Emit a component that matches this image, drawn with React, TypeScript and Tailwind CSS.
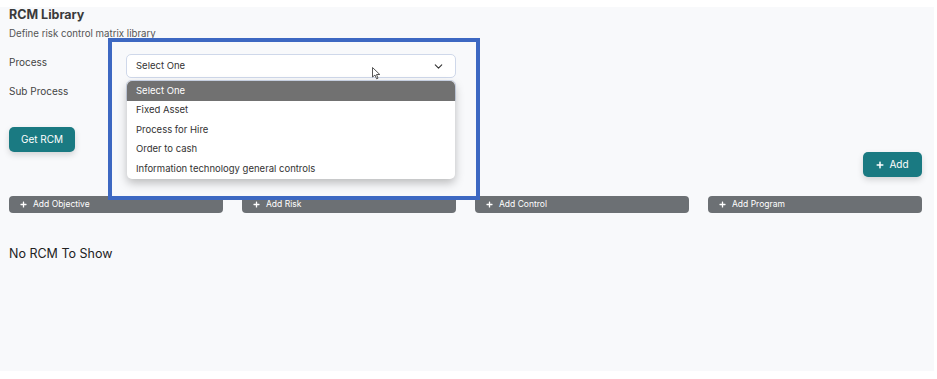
import { ChevronDown } from 'lucide-react';
import { FaPlus } from 'react-icons/fa';

const options = ['Select One', 'Fixed Asset', 'Process for Hire', 'Order to cash', 'Information technology general controls'];
const addBars = ['Add Objective', 'Add Risk', 'Add Control', 'Add Program'];

function SelectBox() {
  return (
    <div className="w-[330px] h-[24px] bg-white border border-[#cfd8ea] rounded-[5px] flex items-center justify-between pl-[9px] pr-[10px]">
      <span className="text-[9.5px] text-[#333]">Select One</span>
      <ChevronDown size={13} strokeWidth={2} className="text-[#333]" />
    </div>
  );
}

export default function App() {
  return (
    <div className="w-[937px] h-[379px] bg-white relative overflow-hidden font-['Inter',sans-serif]">
      <div className="mt-[7px] w-[934px] h-[364px] bg-[#f8f9fb] pl-[9px] pr-[12px]">
        <h1 className="text-[12.5px] font-bold text-[#3a3a3a] leading-[16px]">RCM Library</h1>
        <p className="mt-[4px] text-[9.7px] text-[#555] leading-[14px]">Define risk control matrix library</p>

        <div className="mt-[13px] flex items-center h-[24px]">
          <label className="w-[117px] text-[10px] text-[#444] -mt-[8px]">Process</label>
          <div className="relative">
            <SelectBox />
            <div className="absolute left-[1px] top-[27px] w-[328px] bg-white rounded-[5px] shadow-[0_4px_10px_rgba(0,0,0,0.25)] overflow-hidden z-10">
              {options.map((o, i) => (
                <div
                  key={o}
                  className={`h-[19.5px] flex items-center pl-[9px] text-[9.5px] ${i === 0 ? 'bg-[#717171] text-white' : 'text-[#333]'}`}
                >
                  {o}
                </div>
              ))}
            </div>
          </div>
        </div>

        <div className="mt-[2px] flex items-center h-[24px]">
          <label className="w-[117px] text-[10px] text-[#444] -mt-[2px]">Sub Process</label>
          <SelectBox />
        </div>

        <button className="mt-[23px] w-[66px] h-[25px] rounded-[5px] bg-[#1a7a82] text-white text-[10px] shadow-[0_3px_6px_rgba(0,0,0,0.15)]">
          Get RCM
        </button>

        <div className="flex justify-end">
          <button className="w-[59px] h-[25px] rounded-[5px] bg-[#1a7a82] text-white text-[10px] flex items-center justify-center gap-[5px] shadow-[0_3px_6px_rgba(0,0,0,0.15)]">
            <FaPlus size={8} />
            <span>Add</span>
          </button>
        </div>

        <div className="mt-[19px] grid grid-cols-4 gap-[19px]">
          {addBars.map(b => (
            <div key={b} className="h-[17px] rounded-[4px] bg-[#6c7074] text-white text-[8.5px] flex items-center gap-[6px] pl-[11px]">
              <FaPlus size={7} />
              <span>{b}</span>
            </div>
          ))}
        </div>

        <p className="mt-[32px] text-[12.5px] text-[#222] leading-[18px]">No RCM To Show</p>
      </div>

      <div className="absolute left-[108px] top-[38px] w-[372px] h-[162px] border-[4px] border-[#3d68c2] z-20 pointer-events-none" />

      <svg className="absolute left-[372px] top-[67px] z-30" width="9" height="13" viewBox="0 0 9 13">
        <path d="M0.5 0.5 L0.5 10 L3 8 L4.6 11.8 L6 11.2 L4.5 7.5 L7.8 7.5 Z" fill="white" stroke="#444" strokeWidth="0.9" strokeLinejoin="round" />
      </svg>
    </div>
  );
}
